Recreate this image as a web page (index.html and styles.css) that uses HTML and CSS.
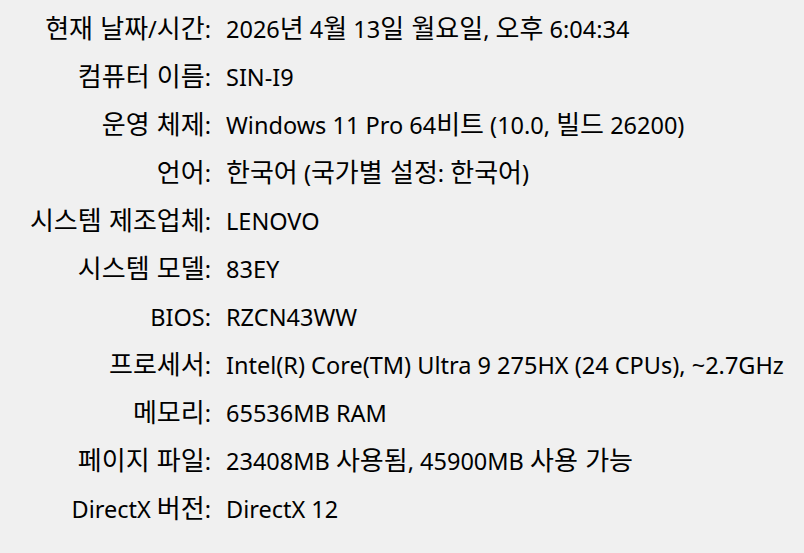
FILE: index.html
```html
<!DOCTYPE html>
<html lang="ko">
<head>
<meta charset="utf-8">
<link rel="stylesheet" href="styles.css">
</head>
<body>
<div class="info">
  <div class="label"><span class="ko">현재 날짜</span>/<span class="ko">시간</span>:</div><div class="value">2026<span class="ko">년</span> 4<span class="ko">월</span> 13<span class="ko">일 월요일</span>, <span class="ko">오후</span> 6:04:34</div>
  <div class="label"><span class="ko">컴퓨터 이름</span>:</div><div class="value">SIN-I9</div>
  <div class="label"><span class="ko">운영 체제</span>:</div><div class="value">Windows 11 Pro 64<span class="ko">비트</span> (10.0, <span class="ko">빌드</span> 26200)</div>
  <div class="label"><span class="ko">언어</span>:</div><div class="value"><span class="ko">한국어</span> (<span class="ko">국가별 설정</span>: <span class="ko">한국어</span>)</div>
  <div class="label"><span class="ko">시스템 제조업체</span>:</div><div class="value">LENOVO</div>
  <div class="label"><span class="ko">시스템 모델</span>:</div><div class="value">83EY</div>
  <div class="label">BIOS:</div><div class="value">RZCN43WW</div>
  <div class="label"><span class="ko">프로세서</span>:</div><div class="value">Intel(R) Core(TM) Ultra 9 275HX (24 CPUs), ~2.7GHz</div>
  <div class="label"><span class="ko">메모리</span>:</div><div class="value">65536MB RAM</div>
  <div class="label"><span class="ko">페이지 파일</span>:</div><div class="value">23408MB <span class="ko">사용됨</span>, 45900MB <span class="ko">사용 가능</span></div>
  <div class="label">DirectX <span class="ko">버전</span>:</div><div class="value">DirectX 12</div>
</div>
</body>
</html>
```
FILE: styles.css
```css
html, body {
  margin: 0;
  background: #f0f0f0;
}
body {
  font-family: "Noto Sans", "Noto Sans CJK KR", sans-serif;
  font-size: 23.5px;
  color: #000;
  padding-top: 5px;
}
.info {
  display: grid;
  grid-template-columns: 211px auto;
  column-gap: 15px;
}
.label, .value {
  line-height: 48px;
  height: 48px;
  white-space: nowrap;
}
.label {
  text-align: right;
}
.ko {
  font-family: "Noto Sans CJK KR", sans-serif;
  font-size: 26px;
  line-height: 1;
}
```
